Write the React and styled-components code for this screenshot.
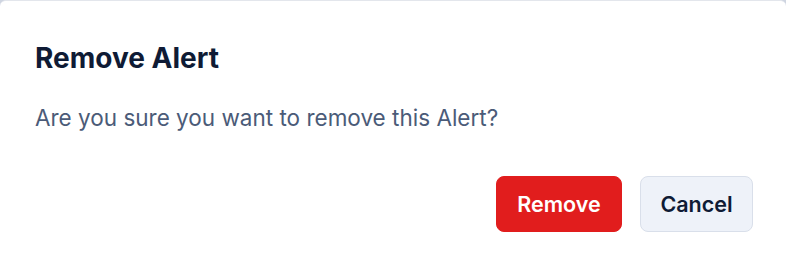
import React from "react";
import styled, { createGlobalStyle } from "styled-components";

const GlobalStyle = createGlobalStyle`
  html, body {
    margin: 0;
    padding: 0;
    background: #cfd5e1;
  }
  body {
    font-family: Inter, "Noto Sans", "Liberation Sans", sans-serif;
    -webkit-font-smoothing: antialiased;
  }
`;

const Dialog = styled.div`
  box-sizing: border-box;
  width: 786px;
  height: 256px;
  background: #ffffff;
  border-top: 1px solid #e3e6ec;
  border-radius: 6px 6px 0 0;
  padding: 40px 33px 0 35px;
  display: flex;
  flex-direction: column;
`;

const Title = styled.h2`
  margin: 0;
  font-size: 28px;
  line-height: 34px;
  font-weight: 700;
  color: #0f1b35;
`;

const Message = styled.p`
  margin: 27px 0 0;
  font-size: 22.5px;
  line-height: 32px;
  font-weight: 400;
  color: #4b5b78;
`;

const Actions = styled.div`
  display: flex;
  justify-content: flex-end;
  gap: 18px;
  margin-top: 42px;
`;

const Button = styled.button`
  box-sizing: border-box;
  height: 56px;
  padding: 0 16px;
  border-radius: 8px;
  font-family: inherit;
  font-size: 21.5px;
  font-weight: 600;
  cursor: pointer;
  border: 1px solid ${(p) => (p.$danger ? "#e11d1d" : "#d9dfea")};
  background: ${(p) => (p.$danger ? "#e11d1d" : "#eef2f9")};
  color: ${(p) => (p.$danger ? "#ffffff" : "#0f1b35")};
  min-width: ${(p) => (p.$danger ? "126px" : "113px")};
`;

export default function App() {
  return (
    <>
      <GlobalStyle />
      <Dialog>
        <Title>Remove Alert</Title>
        <Message>Are you sure you want to remove this Alert?</Message>
        <Actions>
          <Button $danger>Remove</Button>
          <Button>Cancel</Button>
        </Actions>
      </Dialog>
    </>
  );
}
